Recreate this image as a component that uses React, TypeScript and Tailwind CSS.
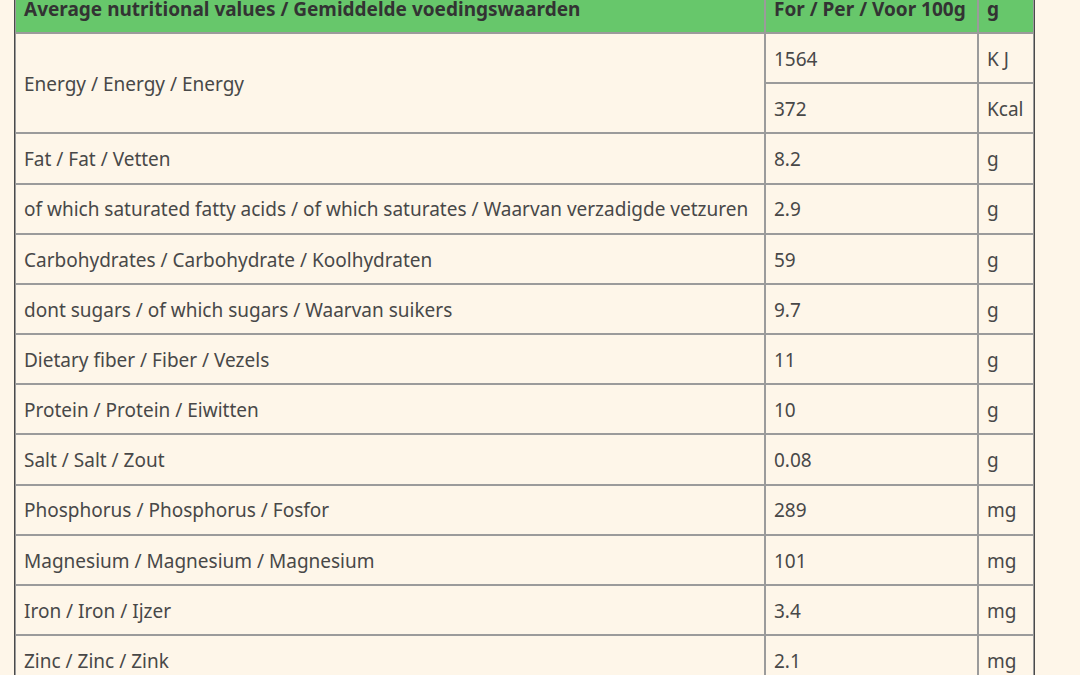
import React from "react";

const ROWS: { label: string; value: string; unit: string }[] = [
  { label: "Fat / Fat / Vetten", value: "8.2", unit: "g" },
  { label: "of which saturated fatty acids / of which saturates / Waarvan verzadigde vetzuren", value: "2.9", unit: "g" },
  { label: "Carbohydrates / Carbohydrate / Koolhydraten", value: "59", unit: "g" },
  { label: "dont sugars / of which sugars / Waarvan suikers", value: "9.7", unit: "g" },
  { label: "Dietary fiber / Fiber / Vezels", value: "11", unit: "g" },
  { label: "Protein / Protein / Eiwitten", value: "10", unit: "g" },
  { label: "Salt / Salt / Zout", value: "0.08", unit: "g" },
  { label: "Phosphorus / Phosphorus / Fosfor", value: "289", unit: "mg" },
  { label: "Magnesium / Magnesium / Magnesium", value: "101", unit: "mg" },
  { label: "Iron / Iron / Ijzer", value: "3.4", unit: "mg" },
  { label: "Zinc / Zinc / Zink", value: "2.1", unit: "mg" },
];

const cell = "border border-[#9b9b9b] px-[8px] pt-[2px] h-[50.17px] align-middle whitespace-nowrap";

export default function App() {
  return (
    <div
      className="w-[1080px] h-[675px] overflow-hidden bg-[#fef6e9] pl-[14px] text-[#484848] text-[19px]"
      style={{ fontFamily: '"Noto Sans", sans-serif' }}
    >
      <table className="-mt-[18px] w-[1020px] border-separate border-spacing-0 border border-[#4a4a4a] table-fixed">
        <colgroup>
          <col className="w-[750px]" />
          <col className="w-[213px]" />
          <col className="w-[56px]" />
        </colgroup>
        <thead>
          <tr className="bg-[#67c76b] font-bold text-[#333]">
            <th className={`${cell} text-left`}>Average nutritional values / Gemiddelde voedingswaarden</th>
            <th className={`${cell} text-left`}>For / Per / Voor 100g</th>
            <th className={`${cell} text-left`}>g</th>
          </tr>
        </thead>
        <tbody>
          <tr>
            <td rowSpan={2} className={cell}>Energy / Energy / Energy</td>
            <td className={cell}>1564</td>
            <td className={cell}>K J</td>
          </tr>
          <tr>
            <td className={cell}>372</td>
            <td className={cell}>Kcal</td>
          </tr>
          {ROWS.map((r) => (
            <tr key={r.label}>
              <td className={cell}>{r.label}</td>
              <td className={cell}>{r.value}</td>
              <td className={cell}>{r.unit}</td>
            </tr>
          ))}
        </tbody>
      </table>
    </div>
  );
}
